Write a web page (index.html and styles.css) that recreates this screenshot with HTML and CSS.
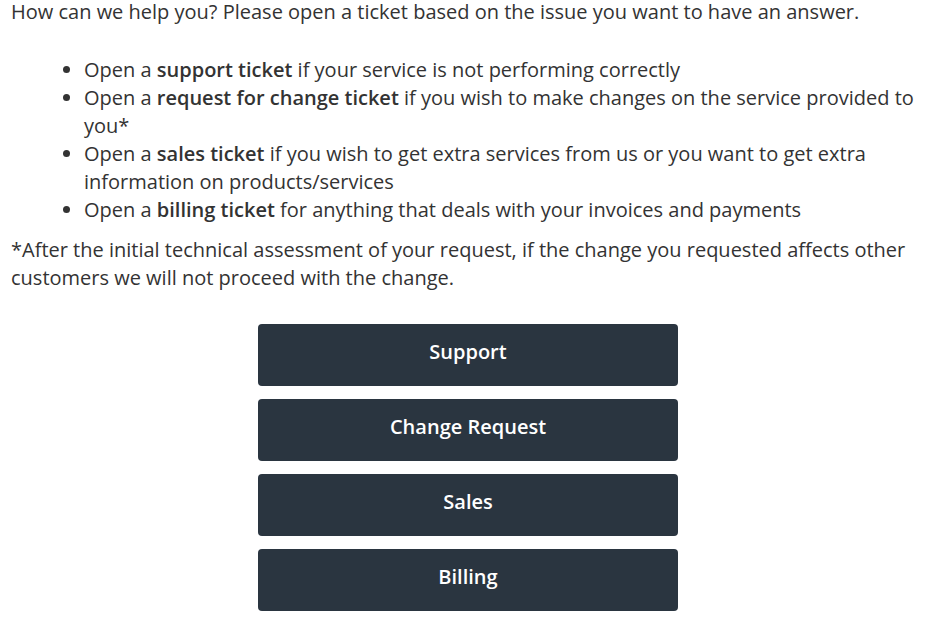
FILE: index.html
```html
<!DOCTYPE html>
<html lang="en">

<head>
    <meta charset="UTF-8">
    <title>Open a ticket</title>
    <link rel="stylesheet" href="styles.css">
</head>

<body>
    <div id="container">
        <p class="intro">How can we help you? Please open a ticket based on the issue you want to have an answer.</p>
        <ul class="types">
            <li>Open a <strong>support ticket</strong> if your service is not performing correctly</li>
            <li>Open a <strong>request for change ticket</strong> if you wish to make changes on the service provided to you*</li>
            <li>Open a <strong>sales ticket</strong> if you wish to get extra services from us or you want to get extra information on products/services</li>
            <li>Open a <strong>billing ticket</strong> for anything that deals with your invoices and payments</li>
        </ul>
        <p class="note">*After the initial technical assessment of your request, if the change you requested affects other customers we will not proceed with the change.</p>
        <div class="buttons">
            <a class="btn" href="#">Support</a>
            <a class="btn" href="#">Change Request</a>
            <a class="btn" href="#">Sales</a>
            <a class="btn" href="#">Billing</a>
        </div>
    </div>
</body>

</html>
```
FILE: styles.css
```css
* {
    margin: 0;
    padding: 0;
}

body {
    font-family: "Open Sans", "Liberation Sans", sans-serif;
    font-size: 20px;
    line-height: 28px;
    color: #333;
    background: #fff;
}

#container {
    padding: 0 2px 0 11px;
    margin-top: -2px;
}

.types {
    margin: 30px 0 12px;
    padding-left: 73px;
}

.types strong {
    font-weight: 600;
}

.buttons {
    display: flex;
    flex-direction: column;
    align-items: center;
    gap: 13px;
    margin-top: 32px;
}

.btn {
    display: flex;
    align-items: center;
    justify-content: center;
    width: 420px;
    height: 62px;
    padding-bottom: 6px;
    box-sizing: border-box;
    border-radius: 4px;
    background: #2a3540;
    color: #fff;
    font-size: 20px;
    font-weight: 600;
    text-decoration: none;
}
```
